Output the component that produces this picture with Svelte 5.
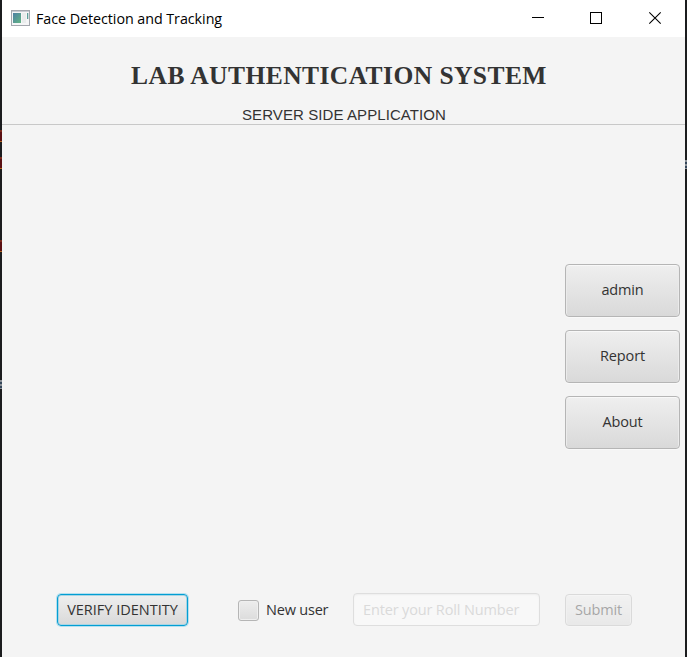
<script>
  const actions = ['admin', 'Report', 'About'];
  let newUser = $state(false);
</script>

<div class="desktop">
  <i class="mark red" style:top="130px"></i>
  <i class="mark red" style:top="157px"></i>
  <i class="mark red" style:top="240px"></i>
  <i class="mark grey" style:top="380px"></i>
  <i class="mark grey right" style:top="160px"></i>
  <div class="window">
    <header class="titlebar">
      <svg class="appicon" width="19" height="16" viewBox="0 0 19 16">
        <defs>
          <linearGradient id="screen" x1="0" y1="0" x2="1" y2="1">
            <stop offset="0" stop-color="#4d7fa3" />
            <stop offset="1" stop-color="#62b584" />
          </linearGradient>
        </defs>
        <rect x=".5" y=".5" width="18" height="15" fill="#f5f5f6" stroke="#a4a7ae" />
        <path d="M1 1.5h17" stroke="#c7cbd2" />
        <rect x="2" y="3" width="8" height="10" fill="url(#screen)" />
        <rect x="11" y="3" width="4" height="10" fill="#e9ecec" />
        <rect x="16" y="3" width="1.3" height="6" fill="#5d9f9a" />
      </svg>
      <span class="caption">Face Detection and Tracking</span>
      <div class="controls">
        <svg width="12" height="12" viewBox="0 0 12 12" shape-rendering="crispEdges"><path d="M1 5.5h12" stroke="#000" /></svg>
        <svg width="12" height="12" viewBox="0 0 12 12" shape-rendering="crispEdges"><rect x=".5" y=".5" width="11" height="11" fill="none" stroke="#000" /></svg>
        <svg width="12" height="12" viewBox="0 0 12 12"><path d="M.3.3l11.4 11.4M11.7.3L.3 11.7" stroke="#000" stroke-width="1.1" /></svg>
      </div>
    </header>

    <section class="heading">
      <h1>LAB AUTHENTICATION SYSTEM</h1>
      <h2>SERVER SIDE APPLICATION</h2>
    </section>

    <main>
      <nav>
        {#each actions as action}
          <button class="btn">{action}</button>
        {/each}
      </nav>
    </main>

    <footer>
      <button class="btn verify">VERIFY IDENTITY</button>
      <label class="check">
        <input type="checkbox" bind:checked={newUser} />
        <span>New user</span>
      </label>
      <input class="roll" type="text" placeholder="Enter your Roll Number" disabled={!newUser} />
      <button class="btn submit" disabled={!newUser}>Submit</button>
    </footer>
  </div>
</div>

<style>
  .desktop {
    box-sizing: border-box;
    position: relative;
    width: 687px;
    height: 657px;
    padding: 0 2px;
    overflow: hidden;
    background: #1b1c1e;
    font-family: 'Open Sans', 'Noto Sans', sans-serif;
    font-size: 14.5px;
    color: #333;
  }
  .mark { position: absolute; left: 0; width: 2px; }
  .red { height: 12px; background: linear-gradient(#7b2a1c 0 2px, #5a1013 2px 11px, #b5651d 11px); }
  .grey { height: 9px; background: repeating-linear-gradient(#8a8f96 0 2px, #33465a 2px 4px); }
  .right { left: 685px; }
  .window { display: flex; flex-direction: column; height: 100%; background: #f4f4f4; }
  .titlebar {
    box-sizing: border-box;
    display: flex;
    align-items: center;
    height: 37px;
    padding: 0 24px 1px 9px;
    background: #fff;
    color: #000;
  }
  .appicon { margin-right: 6px; }
  .caption { font-size: 14.3px; letter-spacing: -0.05px; white-space: nowrap; }
  .controls { display: flex; gap: 47px; margin-left: auto; }
  .controls svg { display: block; overflow: visible; }
  .heading {
    box-sizing: border-box;
    height: 88px;
    padding-top: 23px;
    border-bottom: 1px solid #c8c8c8;
    text-align: center;
  }
  h1, h2 { margin: 0; white-space: nowrap; }
  h1 { font: bold 25.5px/32px 'Liberation Serif', serif; letter-spacing: 0.44px; padding-right: 9px; }
  h2 { font: 15px/20px 'Liberation Sans', sans-serif; letter-spacing: 0.09px; padding: 13px 0 0 1px; }
  main { display: flex; justify-content: flex-end; flex: 1; padding: 139px 5px 0 0; }
  nav { display: flex; flex-direction: column; gap: 13px; }
  .btn {
    box-sizing: border-box;
    width: 115px;
    height: 53px;
    padding: 0 0 3px;
    border: 1px solid #b5b5b5;
    border-radius: 4px;
    background: linear-gradient(#efefef, #d9d9d9);
    box-shadow: inset 0 1px #f8f8f8, inset 1px 0 #ebebeb, inset -1px 0 #ebebeb, 0 1px #f9f9f9;
    color: #333;
    font: inherit;
    letter-spacing: -0.15px;
    white-space: nowrap;
  }
  footer { display: flex; align-items: flex-start; height: 64px; padding-left: 55px; }
  .verify {
    width: 131px;
    height: 32px;
    margin-top: 1px;
    padding-bottom: 1px;
    border-color: #039ed3;
    box-shadow: 0 0 0 1px #b5e0ef, inset 0 0 0 1px #a9d5e4;
    letter-spacing: 0;
  }
  .check { display: flex; align-items: center; gap: 7px; height: 33px; margin-left: 50px; width: 115px; letter-spacing: -0.2px; }
  .check span { padding-bottom: 1px; }
  .check input {
    appearance: none;
    box-sizing: border-box;
    width: 21px;
    height: 21px;
    margin: 1px 0 0;
    border: 1px solid #b5b5b5;
    border-radius: 3px;
    background: linear-gradient(#ededed, #dcdcdc);
    box-shadow: inset 0 0 0 1px #efefef;
  }
  .roll {
    box-sizing: border-box;
    width: 187px;
    height: 33px;
    padding: 0 9px 1px;
    border: 1px solid #dedede;
    border-radius: 4px;
    background: #f8f8f8;
    box-shadow: inset 0 1px 2px #eeeeee;
    font: inherit;
    letter-spacing: -0.15px;
  }
  .roll::placeholder { color: #dadada; opacity: 1; }
  .submit { width: 67px; height: 32px; margin: 1px 0 0 25px; padding-bottom: 1px; }
  .submit:disabled { opacity: 0.4; }
</style>
